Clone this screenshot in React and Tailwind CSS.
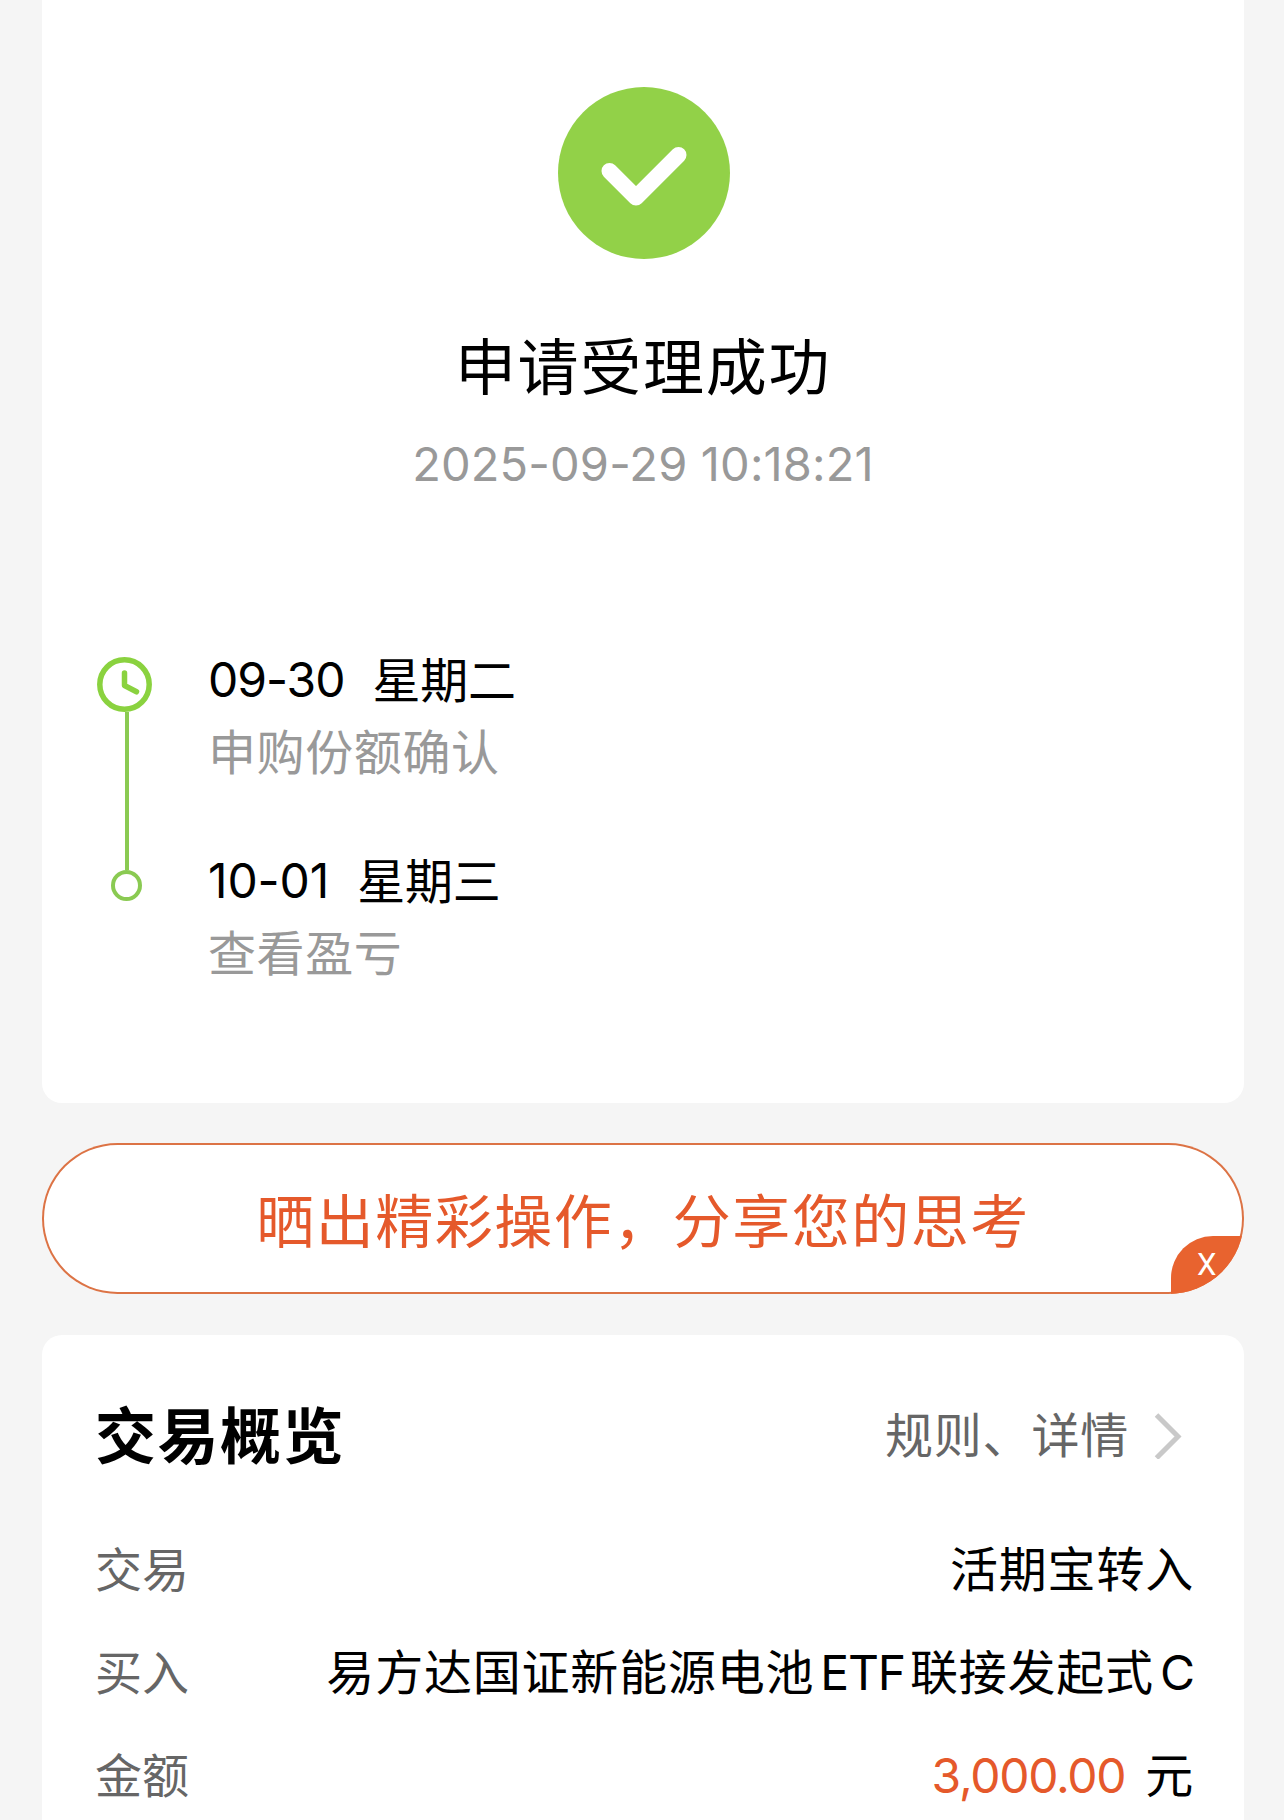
const steps = [
  { date: "09-30", day: "星期二", note: "申购份额确认", spacing: "tracking-[-1px]" },
  { date: "10-01", day: "星期三", note: "查看盈亏", spacing: "tracking-[-0.1px]" },
];

function SuccessIcon() {
  return (
    <svg className="w-[172px] h-[172px] ml-[2px]" viewBox="0 0 172 172" fill="none">
      <circle cx="86" cy="86" r="86" fill="#92d148" />
      <path
        d="M51.5 84L78 110.5L120.5 68"
        stroke="#fff"
        strokeWidth="16"
        strokeLinecap="round"
        strokeLinejoin="round"
      />
    </svg>
  );
}

function ClockIcon() {
  return (
    <svg className="w-[55px] h-[55px] mr-[2px]" viewBox="0 0 55 55" fill="none" stroke="#8ad23f" strokeWidth="5.5">
      <circle cx="27.5" cy="27.5" r="24.7" />
      <path d="M27.5 16V28.5L39.5 34.8" strokeLinecap="round" strokeLinejoin="round" />
    </svg>
  );
}

function ChevronIcon() {
  return (
    <svg className="w-[30px] h-[46px] ml-[25px] mr-[9px]" viewBox="0 0 30 46" fill="none">
      <path d="M2.5 2L24 23.5L2.5 45" stroke="#c9c9c9" strokeWidth="5" />
    </svg>
  );
}

function Timeline() {
  return (
    <div className="flex mt-[160px] pl-[54px]">
      {/* Línea de progreso */}
      <div className="flex flex-col items-center w-[58px] mt-[5px]">
        <ClockIcon />
        <div className="w-1 h-[158px] ml-[3px] bg-[#8aca52]" />
        <div className="w-[31px] h-[31px] ml-[3px] rounded-full border-4 border-[#8aca52]" />
      </div>

      <div className="flex flex-col gap-[72px] ml-[54px] text-[48px] leading-[56px]">
        {steps.map((step) => (
          <div key={step.date} className="flex flex-col gap-[16px]">
            <div className="flex gap-[28px]">
              <span className={step.spacing}>{step.date}</span>
              <span className="pt-px tracking-[-0.2px]">{step.day}</span>
            </div>
            <p className="text-[#999] tracking-[0.6px]">{step.note}</p>
          </div>
        ))}
      </div>
    </div>
  );
}

function Row({ label, children }) {
  return (
    <div className="flex justify-between">
      <span className="text-[47px] tracking-normal text-[#666]">{label}</span>
      <span className="flex">{children}</span>
    </div>
  );
}

export default function App() {
  return (
    <div className="w-[1284px] h-[1820px] overflow-hidden bg-[#f5f5f5] pl-[42px] pr-[40px] text-black font-['Inter','Noto_Sans_CJK_SC',sans-serif]">
      {/* Resultado */}
      <section className="h-[1103px] bg-white rounded-b-[20px] pt-[87px]">
        <div className="flex flex-col items-center">
          <SuccessIcon />
          <h1 className="mt-[67px] text-[61px] leading-[84px] tracking-[1.7px]">申请受理成功</h1>
          <p className="mt-[26px] text-[47px] leading-[56px] tracking-[0.15px] text-[#999]">
            2025-09-29 10:18:21
          </p>
        </div>
        <Timeline />
      </section>

      {/* Compartir */}
      <div className="relative overflow-hidden flex items-center justify-center h-[151px] mt-10 rounded-full bg-white shadow-[inset_0_0_0_2px_#dc7345]">
        <span className="pt-[6px] text-[58px] leading-[80px] tracking-[1.5px] text-[#e5592b]">
          晒出精彩操作，分享您的思考
        </span>
        <button className="absolute right-0 bottom-0 w-[73px] h-[58px] rounded-tl-[42px] bg-[#e8632f] pl-[26px] text-left text-[31px] leading-[56px] text-white font-['Roboto',sans-serif]">
          X
        </button>
      </div>

      {/* Resumen */}
      <section className="mt-[41px] h-[600px] bg-white rounded-t-[20px] pt-[60px] pl-[53px] pr-[50px]">
        <div className="flex items-center justify-between">
          <h2 className="text-[61px] leading-[84px] tracking-[1.5px] font-bold">交易概览</h2>
          <div className="flex items-center pb-[3px] pr-px text-[48px] leading-[56px] tracking-[0.8px] text-[#666]">
            规则、详情
            <ChevronIcon />
          </div>
        </div>

        <div className="flex flex-col gap-[47px] mt-[63px] text-[48px] leading-[56px] tracking-[0.8px]">
          <Row label="交易">活期宝转入</Row>
          <Row label="买入">
            <span>易方达国证新能源电池</span>
            <span className="ml-[6px] mr-[5px] tracking-[-1.2px]">ETF</span>
            <span>联接发起式</span>
            <span className="ml-[6px] -mr-px tracking-normal">C</span>
          </Row>
          <Row label="金额">
            <span className="tracking-[-1.3px] text-[#e5592b]">3,000.00</span>
            <span className="ml-[20px]">元</span>
          </Row>
        </div>
      </section>
    </div>
  );
}
